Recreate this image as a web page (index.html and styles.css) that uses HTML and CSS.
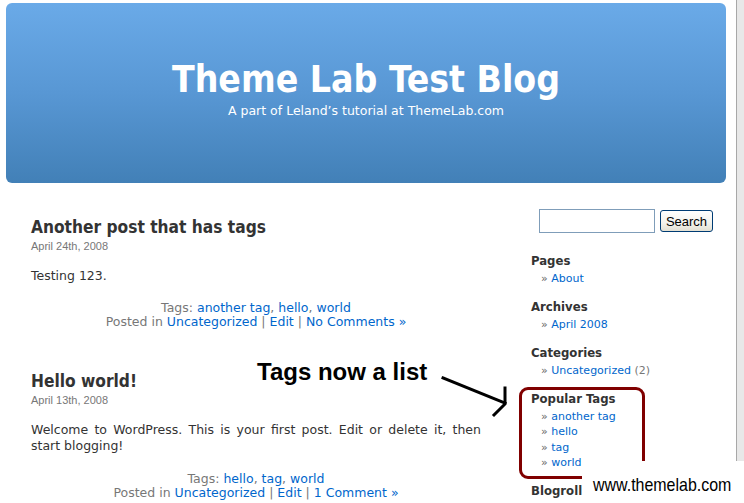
FILE: index.html
```
<!DOCTYPE html>
<html lang="en">
<head>
<meta charset="utf-8">
<title>Theme Lab Test Blog</title>
<link rel="stylesheet" href="styles.css">
</head>
<body>
<div class="window">
  <div class="page">
    <header class="masthead">
      <h1 class="blog-title">Theme Lab Test Blog</h1>
      <p class="tagline">A part of Leland’s tutorial at ThemeLab.com</p>
    </header>
    <div class="content">
      <main class="posts">
        <article class="post">
          <h2 class="post-title">Another post that has tags</h2>
          <p class="post-date">April 24th, 2008</p>
          <div class="post-body"><p>Testing 123.</p></div>
          <div class="post-meta">
            <div>Tags: <a href="#">another tag</a>, <a href="#">hello</a>, <a href="#">world</a></div>
            <div>Posted in <a href="#">Uncategorized</a> | <a href="#">Edit</a> | <a href="#">No Comments »</a></div>
          </div>
        </article>
        <article class="post">
          <h2 class="post-title">Hello world!</h2>
          <p class="post-date">April 13th, 2008</p>
          <div class="post-body"><p>Welcome to WordPress. This is your first post. Edit or delete it, then start blogging!</p></div>
          <div class="post-meta">
            <div>Tags: <a href="#">hello</a>, <a href="#">tag</a>, <a href="#">world</a></div>
            <div>Posted in <a href="#">Uncategorized</a> | <a href="#">Edit</a> | <a href="#">1 Comment »</a></div>
          </div>
        </article>
      </main>
      <aside class="sidebar">
        <form class="search">
          <input type="text" class="search-input">
          <button type="button" class="search-button">Search</button>
        </form>
        <section class="widget">
          <h3 class="widget-title">Pages</h3>
          <ul class="widget-list"><li><a href="#">About</a></li></ul>
        </section>
        <section class="widget">
          <h3 class="widget-title">Archives</h3>
          <ul class="widget-list"><li><a href="#">April 2008</a></li></ul>
        </section>
        <section class="widget">
          <h3 class="widget-title">Categories</h3>
          <ul class="widget-list"><li><a href="#">Uncategorized</a> <span class="count">(2)</span></li></ul>
        </section>
        <section class="widget">
          <h3 class="widget-title">Popular Tags</h3>
          <ul class="widget-list">
            <li><a href="#">another tag</a></li>
            <li><a href="#">hello</a></li>
            <li><a href="#">tag</a></li>
            <li><a href="#">world</a></li>
          </ul>
        </section>
        <section class="widget">
          <h3 class="widget-title">Blogroll</h3>
        </section>
      </aside>
    </div>
  </div>
  <div class="edge"></div>
</div>

<p class="callout">Tags now a list</p>
<svg class="arrow" width="744" height="503" viewBox="0 0 744 503">
  <g stroke="#000" stroke-width="3" fill="none" stroke-linecap="square">
    <path d="M443 378 L505 403"/>
    <path d="M505 388 L505 404 L494 415"/>
  </g>
</svg>
<div class="highlight"></div>
<div class="watermark"><span class="watermark-text">www.themelab.com</span></div>
</body>
</html>
```
FILE: styles.css
```
html, body {
  margin: 0;
  padding: 0;
  overflow: hidden;
  background: #fff;
}
body {
  font-family: "DejaVu Sans", Verdana, sans-serif;
  color: #333;
  position: relative;
  width: 744px;
  height: 503px;
}
a { color: #0066cc; text-decoration: none; }

.window {
  display: flex;
  height: 503px;
}
.page {
  flex: 1;
  padding: 3px 10px 0 6px;
}
.edge {
  width: 7px;
  border-left: 1px solid #a8a8a8;
  background: #e8e8e8;
}

.masthead {
  height: 180px;
  box-sizing: border-box;
  padding-top: 55px;
  border-radius: 6px;
  background: linear-gradient(#6aaae8, #5897d4 50%, #4280b7);
  text-align: center;
  color: #fff;
}
.blog-title {
  margin: 0;
  font-family: "DejaVu Sans Condensed", "DejaVu Sans", sans-serif;
  font-stretch: condensed;
  font-weight: bold;
  font-size: 37px;
  line-height: 44px;
}
.tagline {
  margin: 1px 0 0;
  font-size: 12.5px;
  line-height: 15px;
}

.content {
  display: flex;
  padding: 26px 0 0 25px;
}
.posts {
  width: 450px;
  padding-top: 7px;
}
.post + .post { margin-top: 41px; }
.post-title {
  margin: 0;
  font-family: "DejaVu Sans Condensed", "DejaVu Sans", sans-serif;
  font-stretch: condensed;
  font-weight: bold;
  font-size: 17.2px;
  line-height: 22px;
  color: #333;
}
.post-date {
  margin: 1px 0 0;
  font-family: "Liberation Sans", Arial, sans-serif;
  font-size: 11px;
  line-height: 14px;
  color: #777;
}
.post-body p {
  margin: 15px 0 0;
  font-size: 12.5px;
  line-height: 16px;
  text-align: justify;
}
.post-meta {
  margin-top: 17px;
  text-align: center;
  font-size: 12.5px;
  line-height: 14px;
  color: #777;
}
.post + .post .post-meta { margin-top: 18px; }

.sidebar {
  margin-left: 50px;
}
.search {
  display: flex;
  align-items: center;
  margin: 0 0 0 8px;
  height: 24px;
}
.search-input {
  width: 116px;
  height: 24px;
  box-sizing: border-box;
  border: 1px solid #7f9db9;
  margin: 0;
  padding: 0;
  background: #fff;
}
.search-button {
  margin: 0 0 0 5px;
  width: 53px;
  height: 22px;
  box-sizing: border-box;
  padding: 0;
  border: 1px solid #003c74;
  border-radius: 3px;
  background: linear-gradient(#ffffff, #f3f2ec 60%, #e3e0d3);
  font-family: "Liberation Sans", Arial, sans-serif;
  font-size: 13px;
  color: #000;
}
.widget { margin-top: 12.5px; }
.search + .widget { margin-top: 19.5px; }
.widget-title {
  margin: 0;
  font-family: "DejaVu Sans Condensed", "DejaVu Sans", sans-serif;
  font-stretch: condensed;
  font-weight: bold;
  font-size: 13px;
  line-height: 16px;
  color: #333;
}
.widget-list {
  list-style: none;
  margin: 2px 0 0;
  padding: 0 0 0 10px;
  font-size: 11px;
  line-height: 15.5px;
}
.widget-list li::before {
  content: "» ";
  color: #666;
}
.count { color: #777; }

.callout {
  position: absolute;
  left: 257px;
  top: 360px;
  margin: 0;
  font-family: "Liberation Sans", Arial, sans-serif;
  font-weight: bold;
  font-size: 24px;
  line-height: 24px;
  color: #000;
}
.arrow {
  position: absolute;
  left: 0;
  top: 0;
  pointer-events: none;
}
.highlight {
  position: absolute;
  left: 519px;
  top: 387px;
  width: 126px;
  height: 92px;
  box-sizing: border-box;
  border: 3px solid #800000;
  border-radius: 9px;
}
.watermark {
  position: absolute;
  left: 582px;
  top: 461px;
  width: 162px;
  height: 42px;
  box-sizing: border-box;
  padding: 13.5px 0 0 10.5px;
  background: #fff;
}
.watermark-text {
  display: inline-block;
  font-family: "Liberation Sans", Arial, sans-serif;
  font-size: 19px;
  line-height: 19px;
  color: #000;
  transform: scaleX(0.84);
  transform-origin: left center;
  white-space: nowrap;
}
```
